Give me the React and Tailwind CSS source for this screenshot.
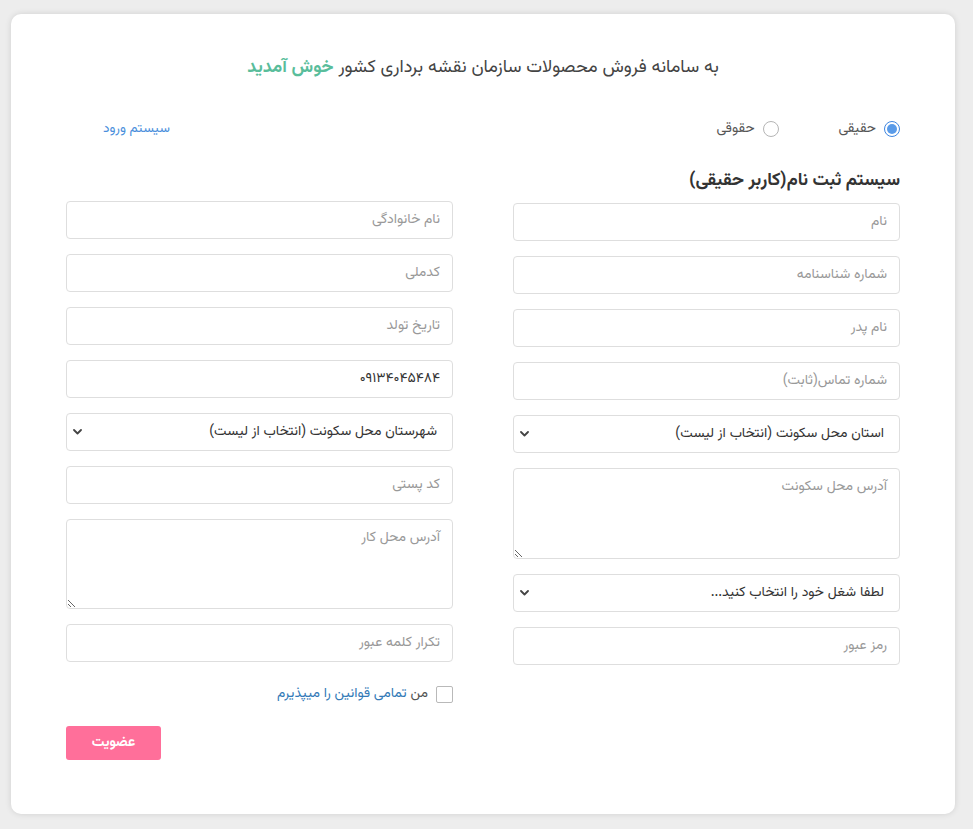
import React from "react";

const font = "font-['Vazirmatn','DejaVu_Sans','Noto_Sans',sans-serif]";

function Field({ placeholder, value }) {
  return (
    <input
      type="text"
      placeholder={placeholder}
      defaultValue={value}
      className={`block h-[38px] w-full rounded-[4px] border border-[#dedede] bg-white px-[12px] text-[14px] text-[#333] placeholder:text-[#999] outline-none ${font}`}
    />
  );
}

function Area({ placeholder, h }) {
  return (
    <textarea
      placeholder={placeholder}
      className={`block w-full rounded-[4px] border border-[#dedede] bg-white px-[12px] py-[8px] text-[14px] text-[#333] placeholder:text-[#999] outline-none ${h} ${font}`}
    />
  );
}

function Chevron() {
  return (
    <svg width="9" height="6" viewBox="0 0 9 6" className="shrink-0">
      <path d="M1 1 L4.5 4.5 L8 1" fill="none" stroke="#444" strokeWidth="1.8" strokeLinecap="round" strokeLinejoin="round" />
    </svg>
  );
}

function Select({ label }) {
  return (
    <div className="flex h-[38px] w-full items-center justify-between rounded-[4px] border border-[#dedede] bg-white pr-[15px] pl-[6px] text-[14px] text-[#333]">
      <span>{label}</span>
      <Chevron />
    </div>
  );
}

function Radio({ checked, label }) {
  return (
    <label className="flex items-center gap-[8px] text-[14px] text-[#555]">
      {checked ? (
        <span className="flex h-[16px] w-[16px] items-center justify-center rounded-full border border-[#3f86e0] bg-white">
          <span className="h-[10px] w-[10px] rounded-full bg-[#5a9be8]" />
        </span>
      ) : (
        <span className="h-[16px] w-[16px] rounded-full border border-[#b5b5b5] bg-white" />
      )}
      <span>{label}</span>
    </label>
  );
}

export default function App() {
  return (
    <div dir="rtl" className={`min-h-[829px] w-full bg-[#ededed] pt-[14px] pb-[15px] ${font}`}>
      <div className="mr-[18px] ml-[11px] h-[800px] rounded-[10px] bg-white px-[55px] pt-[41px] shadow-[0_0_6px_rgba(0,0,0,0.12)]">
        {/* welcome line */}
        <p className="text-center text-[18px] leading-[27px] text-[#444]">
          به سامانه فروش محصولات سازمان نقشه برداری کشور{" "}
          <span className="font-bold text-[#59bd9b]">خوش آمدید</span>
        </p>

        {/* account type + login link */}
        <div className="mt-[37px] flex h-[20px] items-center justify-between">
          <div className="flex items-center gap-[60px]">
            <Radio checked label="حقیقی" />
            <Radio label="حقوقی" />
          </div>
          <a className="ml-[37px] text-[13.5px] text-[#4a8fdc]">سیستم ورود</a>
        </div>

        <h2 className="mt-[30px] text-[18px] font-bold leading-[25px] text-[#333]">
          سیستم ثبت نام(کاربر حقیقی)
        </h2>

        <div className="mt-[7px] grid grid-cols-2 gap-x-[60px]">
          {/* right column */}
          <div className="flex flex-col gap-[15px] pt-[2px]">
            <Field placeholder="نام" />
            <Field placeholder="شماره شناسنامه" />
            <Field placeholder="نام پدر" />
            <Field placeholder="شماره تماس(ثابت)" />
            <Select label="استان محل سکونت (انتخاب از لیست)" />
            <Area placeholder="آدرس محل سکونت" h="h-[91px]" />
            <Select label="لطفا شغل خود را انتخاب کنید..." />
            <Field placeholder="رمز عبور" />
          </div>

          {/* left column */}
          <div className="flex flex-col">
            <div className="flex flex-col gap-[15px]">
              <Field placeholder="نام خانوادگی" />
              <Field placeholder="کدملی" />
              <Field placeholder="تاریخ تولد" />
              <Field value="۰۹۱۳۴۰۴۵۴۸۴" />
              <Select label="شهرستان محل سکونت (انتخاب از لیست)" />
              <Field placeholder="کد پستی" />
              <Area placeholder="آدرس محل کار" h="h-[90px]" />
              <Field placeholder="تکرار کلمه عبور" />
            </div>

            <label className="mt-[22px] flex items-center gap-[8px] text-[14px]">
              <span className="h-[17px] w-[17px] rounded-[2px] border border-[#b9b9b9] bg-white" />
              <span className="text-[#555]">
                من <span className="text-[#337ab7]">تمامی قوانین را میپذیرم</span>
              </span>
            </label>

            <div className="mt-[21px] flex justify-end">
              <button className="h-[34px] w-[95px] rounded-[3px] bg-[#ff6f9a] text-[14px] font-bold text-white">
                عضویت
              </button>
            </div>
          </div>
        </div>
      </div>
    </div>
  );
}
